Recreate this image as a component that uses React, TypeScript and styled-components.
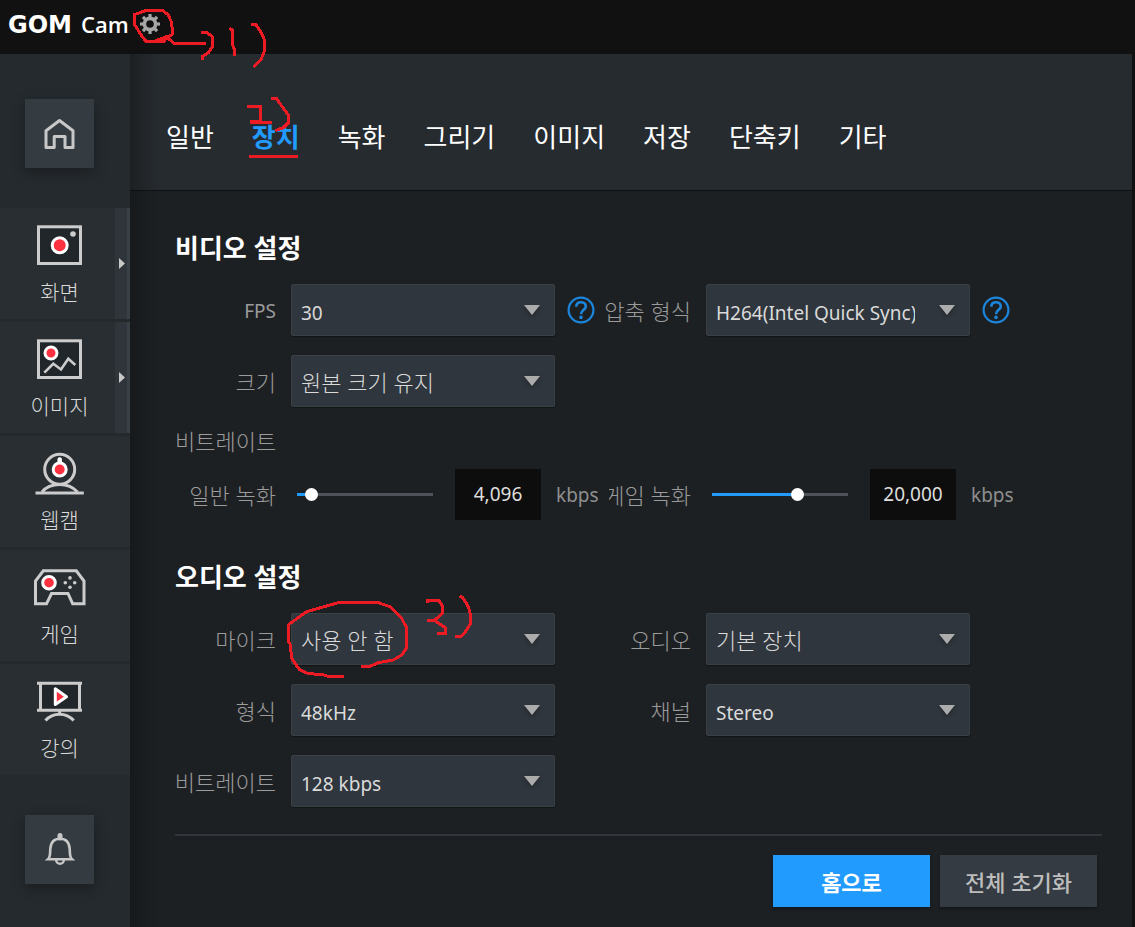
import React, { useState } from "react";
import styled, { createGlobalStyle } from "styled-components";

const GlobalStyle = createGlobalStyle`
  *, *::before, *::after { box-sizing: border-box; }
  html, body { margin: 0; background: #111111; }
  body, button, input, select {
    font-family: "Noto Sans", "Noto Sans CJK KR", sans-serif;
  }
  button { border: 0; padding: 0; cursor: pointer; }
`;

const Page = styled.div`
  position: relative;
  display: flex;
  flex-direction: column;
  min-height: 100vh;
  color: #ffffff;
`;

const TitleBar = styled.header`
  display: flex;
  align-items: center;
  height: 54px;
  padding: 0 0 6px 8px;
  background: #111111;
`;

const Brand = styled.h1`
  display: flex;
  align-items: baseline;
  gap: 9px;
  margin: 0;
  line-height: 30px;
`;

const BrandMark = styled.span`
  font: 700 24px/30px "DejaVu Sans", sans-serif;
`;

const BrandName = styled.span`
  font: 600 22px/30px "Open Sans", sans-serif;
`;

const GearButton = styled.button`
  display: flex;
  margin-left: 10px;
  background: none;
`;

const Body = styled.div`
  display: flex;
  flex: 1;
  padding-right: 3px;
`;

const Sidebar = styled.aside`
  display: flex;
  flex-direction: column;
  gap: 40px;
  flex: 0 0 130px;
  padding: 45px 0 40px;
  background: #252a2e;
`;

const TileButton = styled.button`
  display: flex;
  align-items: center;
  justify-content: center;
  width: 69px;
  height: 69px;
  margin-left: 25px;
  background: #343c41;
  box-shadow: 0 4px 12px rgba(0, 0, 0, 0.3);
`;

const NavList = styled.nav`
  display: flex;
  flex-direction: column;
  gap: 3px;
  background: #24292c;
`;

const NavItem = styled.button`
  display: flex;
  height: 111px;
  background: #292e32;
  color: #dadada;
`;

const NavContent = styled.span`
  display: flex;
  flex: 1;
  flex-direction: column;
  align-items: center;
  gap: 10px;
  height: 100%;
  padding: 16px 0 0 4px;
`;

const NavText = styled.span`
  font-size: 21px;
  font-weight: 300;
  line-height: 28px;
`;

const NavExpand = styled.span<{ $visible: boolean }>`
  display: flex;
  align-items: center;
  width: 15px;
  height: 100%;
  padding-left: 4px;
  background: ${(p) => (p.$visible ? "#2f353a" : "transparent")};
  border-right: 3px solid ${(p) => (p.$visible ? "#394147" : "transparent")};
`;

const Main = styled.main`
  display: flex;
  flex: 1;
  flex-direction: column;
  min-width: 0;
  background: linear-gradient(90deg, rgba(0, 0, 0, 0.22), transparent 30px), #1d2023;
`;

const TabBar = styled.div`
  display: flex;
  align-items: center;
  gap: 38px;
  height: 137px;
  padding: 30px 0 0 36px;
  background: linear-gradient(90deg, rgba(0, 0, 0, 0.26), transparent 30px), #262b2f;
  border-bottom: 1px solid #0e1011;
`;

const Tab = styled.button<{ $active: boolean }>`
  background: none;
  color: ${(p) => (p.$active ? "#229bff" : "#ffffff")};
  font-size: 26px;
  font-weight: ${(p) => (p.$active ? 700 : 400)};
  line-height: 38px;
  white-space: nowrap;
`;

const Form = styled.form`
  padding: 41px 30px 20px 45px;
`;

const Section = styled.section`
  margin-bottom: 41px;

  &:last-of-type {
    margin-bottom: 27px;
  }
`;

const SectionTitle = styled.h2`
  margin: 0 0 20px;
  font-size: 26px;
  font-weight: 700;
  line-height: 32px;
`;

const Fields = styled.div`
  display: grid;
  grid-template-columns: 116px 304px 111px 304px;
  row-gap: 19px;
  align-items: center;
`;

const SliderFields = styled(Fields)`
  margin-top: 12px;
`;

const FieldLabel = styled.label<{ $narrow?: boolean; $latin?: boolean }>`
  display: flex;
  justify-content: flex-end;
  justify-self: end;
  max-width: ${(p) => (p.$narrow ? "82px" : "none")};
  margin-right: 15px;
  padding-top: 2px;
  overflow: hidden;
  color: #9b9b9b;
  font-size: ${(p) => (p.$latin ? "19px" : "22px")};
  font-weight: ${(p) => (p.$latin ? 400 : 300)};
  line-height: 30px;
  white-space: nowrap;
`;

const GroupLabel = styled.div`
  width: 101px;
  margin-top: 19px;
  color: #9b9b9b;
  font-size: 22px;
  font-weight: 300;
  line-height: 30px;
  text-align: right;
  white-space: nowrap;
`;

const Control = styled.div`
  display: flex;
  align-items: center;
  height: 52px;
`;

const SelectBox = styled.div`
  position: relative;
  flex: 0 0 264px;
`;

const SelectInput = styled.select<{ $latin?: boolean }>`
  appearance: none;
  display: block;
  width: 100%;
  height: 52px;
  padding: ${(p) => (p.$latin ? "6px" : "2px")} 54px 0 9px;
  border: 1px solid #3a4145;
  border-radius: 2px;
  background: #2f363d;
  box-shadow: 0 1px 1px rgba(0, 0, 0, 0.4);
  color: #dadada;
  font-size: ${(p) => (p.$latin ? "19px" : "22px")};
  font-weight: ${(p) => (p.$latin ? 400 : 300)};
`;

const SelectArrow = styled.svg`
  position: absolute;
  top: 21px;
  right: 15px;
  pointer-events: none;
  filter: drop-shadow(0 2px 2px rgba(0, 0, 0, 0.3));
`;

const HelpButton = styled.button`
  display: flex;
  margin-left: 12px;
  background: none;
`;

const Slider = styled.input`
  appearance: none;
  flex: 0 0 136px;
  width: 136px;
  height: 13px;
  margin: 0 22px 0 6px;
  background: linear-gradient(#229bff, #229bff) left center / var(--fill) 3px no-repeat,
    linear-gradient(#4d5358, #4d5358) center / 100% 3px no-repeat;

  &::-webkit-slider-thumb {
    appearance: none;
    width: 13px;
    height: 13px;
    border-radius: 50%;
    background: #ffffff;
  }
`;

const ValueInput = styled.input`
  flex: 0 0 86px;
  width: 86px;
  height: 51px;
  padding: 0;
  border: 0;
  background: #0d0d0d;
  color: #dedede;
  font-size: 19px;
  text-align: center;
`;

const Unit = styled.span`
  margin-left: 15px;
  padding-top: 2px;
  color: #8e8e8e;
  font-size: 19px;
  line-height: 30px;
`;

const Footer = styled.footer`
  display: flex;
  justify-content: flex-end;
  gap: 10px;
  padding: 19px 5px 0 0;
  border-top: 2px solid #30353b;
`;

const ActionButton = styled.button<{ $primary?: boolean }>`
  width: 157px;
  height: 52px;
  background: ${(p) => (p.$primary ? "#229bff" : "#343b42")};
  box-shadow: 0 2px 3px rgba(0, 0, 0, 0.3);
  color: ${(p) => (p.$primary ? "#ffffff" : "#bdbdbd")};
  font-size: 22px;
  font-weight: ${(p) => (p.$primary ? 700 : 500)};
`;

const PenMarks = styled.svg`
  position: absolute;
  top: 0;
  left: 0;
  pointer-events: none;
`;

const line = { fill: "none", stroke: "#cccccc", strokeWidth: 3 };

const RecordDot = ({ x, y, r }: { x: number; y: number; r: number }) => (
  <circle cx={x} cy={y} r={r} fill="#ff3040" stroke="#ffffff" strokeWidth="3" />
);

const ScreenIcon = () => (
  <>
    <rect x="5.5" y="2.8" width="42" height="36.7" {...line} fill="#20262a" />
    <RecordDot x={26.7} y={21.3} r={7.5} />
    <circle cx="40" cy="10" r="2.8" fill="#cccccc" />
  </>
);

const ImageIcon = () => (
  <>
    <rect x="5.5" y="2.8" width="42" height="36.7" {...line} fill="#20262a" />
    <path d="M11.3 34.7 20.3 25.8 28 31.5 35.3 20.8 42.3 27" {...line} strokeWidth="2.6" />
    <RecordDot x={18} y={15} r={6} />
  </>
);

const WebcamIcon = () => (
  <>
    <circle cx="26.7" cy="17.3" r="15" {...line} />
    <path d="M9 40C13 35 19 32.5 26.7 32.5S40 35 44.5 40" {...line} />
    <path d="M2.5 41H50.8" {...line} />
    <path d="M26.7 7.5V11" stroke="#ffffff" strokeWidth="4.5" strokeLinecap="round" />
    <RecordDot x={26.7} y={17.5} r={6.5} />
  </>
);

const GameIcon = () => (
  <>
    <path d="M2.5 37.8V15L10.3 4.8H43.3L51 15V37.8H39.7L35 27.5H18.5L13.5 37.8Z" {...line} />
    <RecordDot x={16} y={16.7} r={6.3} />
    <g fill="#cccccc">
      <circle cx="37" cy="11.9" r="1.8" />
      <circle cx="32.3" cy="16.7" r="1.8" />
      <circle cx="41.7" cy="16.7" r="1.8" />
      <circle cx="37" cy="21.3" r="1.8" />
    </g>
  </>
);

const LectureIcon = () => (
  <>
    <path d="M7.5 3V30.3M46.5 3V30.3" {...line} />
    <rect x="9" y="4" width="36" height="25" fill="#20262a" />
    <path d="M4 3.2H49M4 30.3H49M26.7 31V34" {...line} />
    <path d="M12.5 40.5C16 36.5 21 34.2 26.7 34.2S37 36.5 40.7 40.5" {...line} />
    <path
      d="M22.3 8.8V24.6L33.5 16.7Z"
      fill="#ff3040"
      stroke="#ffffff"
      strokeWidth="3"
      strokeLinejoin="round"
    />
  </>
);

const HomeIcon = () => (
  <svg width="33" height="33" viewBox="0 0 33 33" aria-hidden="true">
    <path
      d="M16.5 3.5 3 13.7V30.5H11.2V19.5H22V30.5H30V13.7Z"
      {...line}
      stroke="#c8c8c8"
      strokeLinejoin="round"
    />
  </svg>
);

const BellIcon = () => (
  <svg width="33" height="33" viewBox="0 0 33 33" aria-hidden="true">
    <g transform="translate(0 -1)" fill="none" stroke="#c8c8c8" strokeWidth="2.6">
      <path d="M17 3.5V6" strokeWidth="5" strokeLinecap="round" />
      <path d="M5 27.3C7.5 25 7 21 7.3 17 7.8 10 11 6.8 17 6.8S26.2 10 26.7 17C27 21 26.5 25 29 27.3Z" />
      <path d="M13.2 28A3.8 3.8 0 0 0 20.8 28" strokeWidth="2.4" />
    </g>
  </svg>
);

const GearIcon = () => (
  <svg width="22" height="22" viewBox="0 0 22 22" aria-hidden="true">
    <g stroke="#a6a6a6" fill="none">
      <circle cx="11" cy="11" r="5.6" strokeWidth="3.6" />
      {[0, 45, 90, 135, 180, 225, 270, 315].map((angle) => (
        <path key={angle} d="M11 1V5" strokeWidth="3.2" transform={`rotate(${angle} 11 11)`} />
      ))}
    </g>
  </svg>
);

const HelpIcon = () => (
  <svg width="28" height="28" viewBox="0 0 28 28" aria-hidden="true">
    <g fill="none" stroke="#1c86dc" strokeWidth="2.2">
      <circle cx="14" cy="14" r="12.4" />
      <path d="M9.3 10.8C9.3 7.8 11.3 6.2 14 6.2S18.8 7.9 18.8 10.4C18.8 13.7 14 14 14 18.3" strokeWidth="2.6" />
    </g>
    <circle cx="14" cy="21.4" r="1.8" fill="#1c86dc" />
  </svg>
);

const NAV = [
  { label: "화면", icon: <ScreenIcon />, expandable: true },
  { label: "이미지", icon: <ImageIcon />, expandable: true },
  { label: "웹캠", icon: <WebcamIcon />, expandable: false },
  { label: "게임", icon: <GameIcon />, expandable: false },
  { label: "강의", icon: <LectureIcon />, expandable: false },
];

const TABS = ["일반", "장치", "녹화", "그리기", "이미지", "저장", "단축키", "기타"];

type SelectProps = { id: string; label: string; value: string; latin?: boolean; latinLabel?: boolean; help?: boolean };

const SelectField = ({ id, label, value, latin, latinLabel, help }: SelectProps) => (
  <>
    <FieldLabel htmlFor={id} $latin={latinLabel}>
      {label}
    </FieldLabel>
    <Control>
      <SelectBox>
        <SelectInput id={id} $latin={latin}>
          <option>{value}</option>
        </SelectInput>
        <SelectArrow width="16" height="10" viewBox="0 0 16 10" aria-hidden="true">
          <path d="M0 0H16L8 10Z" fill="#acacac" />
        </SelectArrow>
      </SelectBox>
      {help && (
        <HelpButton type="button" aria-label={`${label} 도움말`}>
          <HelpIcon />
        </HelpButton>
      )}
    </Control>
  </>
);

type BitrateProps = { id: string; label: string; initial: number; max: number; narrow?: boolean };

const BitrateField = ({ id, label, initial, max, narrow }: BitrateProps) => {
  const [value, setValue] = useState(initial);
  const fill = { "--fill": `${(value / max) * 100}%` } as React.CSSProperties;
  return (
    <>
      <FieldLabel htmlFor={id} $narrow={narrow}>
        {label}
      </FieldLabel>
      <Control>
        <Slider
          id={id}
          type="range"
          min={0}
          max={max}
          value={value}
          style={fill}
          onChange={(e) => setValue(Number(e.target.value))}
        />
        <ValueInput
          type="text"
          aria-label={`${label} kbps`}
          value={value.toLocaleString("en-US")}
          onChange={(e) => setValue(Math.min(max, Number(e.target.value.replace(/\D/g, ""))))}
        />
        <Unit>kbps</Unit>
      </Control>
    </>
  );
};

const HandMarks = () => (
  <PenMarks width="480" height="690" viewBox="0 0 480 690" aria-hidden="true">
    <g fill="none" stroke="#ed1c24" strokeWidth="9" shapeRendering="crispEdges">
      <g transform="scale(0.3333)">
        <path d="M425 36 440 31H488L505 45 515 68 518 102 498 115 490 126H440L425 108 410 83 403 75V44L430 34" />
        <path d="M466 122 500 110 523 132H618" />
        <path d="M603 97H620L637 110V140L625 158 607 170V180" />
        <path d="M688 85 698 90V135L704 150V167" />
        <path d="M753 72 768 74 785 100 794 122V152L783 178 768 193 761 201" />
      </g>
      <g transform="translate(150 80) scale(0.3333)">
        <path d="M291 79H332V124H305V128H366" />
        <path d="M363 55 380 56 400 85 415 105V128L400 143 376 152" />
        <path d="M297 229H444" />
      </g>
      <g transform="translate(160 590) scale(0.3333)">
        <path d="M552 260 500 258 490 254 445 251 420 240 408 225 394 203 392 165 386 155 387 103 440 65 535 38H655L690 50 725 85 739 112V175L725 195 700 210 655 218 630 229 603 230" />
        <path d="M802 38V33H838L849 50V68L825 90 802 92H825L858 115V132H832" />
        <path d="M898 19 908 22 925 50 932 75V100L915 128 903 139H886" />
      </g>
    </g>
  </PenMarks>
);

export default function App() {
  const [tab, setTab] = useState("장치");
  return (
    <Page>
      <GlobalStyle />
      <TitleBar>
        <Brand>
          <BrandMark>GOM</BrandMark>
          <BrandName>Cam</BrandName>
        </Brand>
        <GearButton type="button" aria-label="설정">
          <GearIcon />
        </GearButton>
      </TitleBar>
      <Body>
        <Sidebar>
          <TileButton type="button" aria-label="홈">
            <HomeIcon />
          </TileButton>
          <NavList>
            {NAV.map((item) => (
              <NavItem key={item.label} type="button">
                <NavContent>
                  <svg width="53" height="44" viewBox="0 0 53 44" aria-hidden="true">
                    {item.icon}
                  </svg>
                  <NavText>{item.label}</NavText>
                </NavContent>
                <NavExpand $visible={item.expandable}>
                  {item.expandable && (
                    <svg width="6" height="11" viewBox="0 0 6 11" aria-hidden="true">
                      <path d="M0 0 6 5.5 0 11Z" fill="#c8c8c8" />
                    </svg>
                  )}
                </NavExpand>
              </NavItem>
            ))}
          </NavList>
          <TileButton type="button" aria-label="알림">
            <BellIcon />
          </TileButton>
        </Sidebar>
        <Main>
          <TabBar role="tablist">
            {TABS.map((name) => (
              <Tab
                key={name}
                type="button"
                role="tab"
                aria-selected={name === tab}
                $active={name === tab}
                onClick={() => setTab(name)}
              >
                {name}
              </Tab>
            ))}
          </TabBar>
          <Form onSubmit={(e) => e.preventDefault()}>
            <Section>
              <SectionTitle>비디오 설정</SectionTitle>
              <Fields>
                <SelectField id="fps" label="FPS" value="30" latin latinLabel help />
                <SelectField id="codec" label="압축 형식" value="H264(Intel Quick Sync)" latin help />
                <SelectField id="size" label="크기" value="원본 크기 유지" />
              </Fields>
              <GroupLabel>비트레이트</GroupLabel>
              <SliderFields>
                <BitrateField id="normal-rate" label="일반 녹화" initial={4096} max={67000} />
                <BitrateField id="game-rate" label="게임 녹화" initial={20000} max={31000} narrow />
              </SliderFields>
            </Section>
            <Section>
              <SectionTitle>오디오 설정</SectionTitle>
              <Fields>
                <SelectField id="mic" label="마이크" value="사용 안 함" />
                <SelectField id="audio" label="오디오" value="기본 장치" />
                <SelectField id="format" label="형식" value="48kHz" latin />
                <SelectField id="channel" label="채널" value="Stereo" latin />
                <SelectField id="audio-rate" label="비트레이트" value="128 kbps" latin />
              </Fields>
            </Section>
            <Footer>
              <ActionButton type="button" $primary>
                홈으로
              </ActionButton>
              <ActionButton type="reset">전체 초기화</ActionButton>
            </Footer>
          </Form>
        </Main>
      </Body>
      <HandMarks />
    </Page>
  );
}
